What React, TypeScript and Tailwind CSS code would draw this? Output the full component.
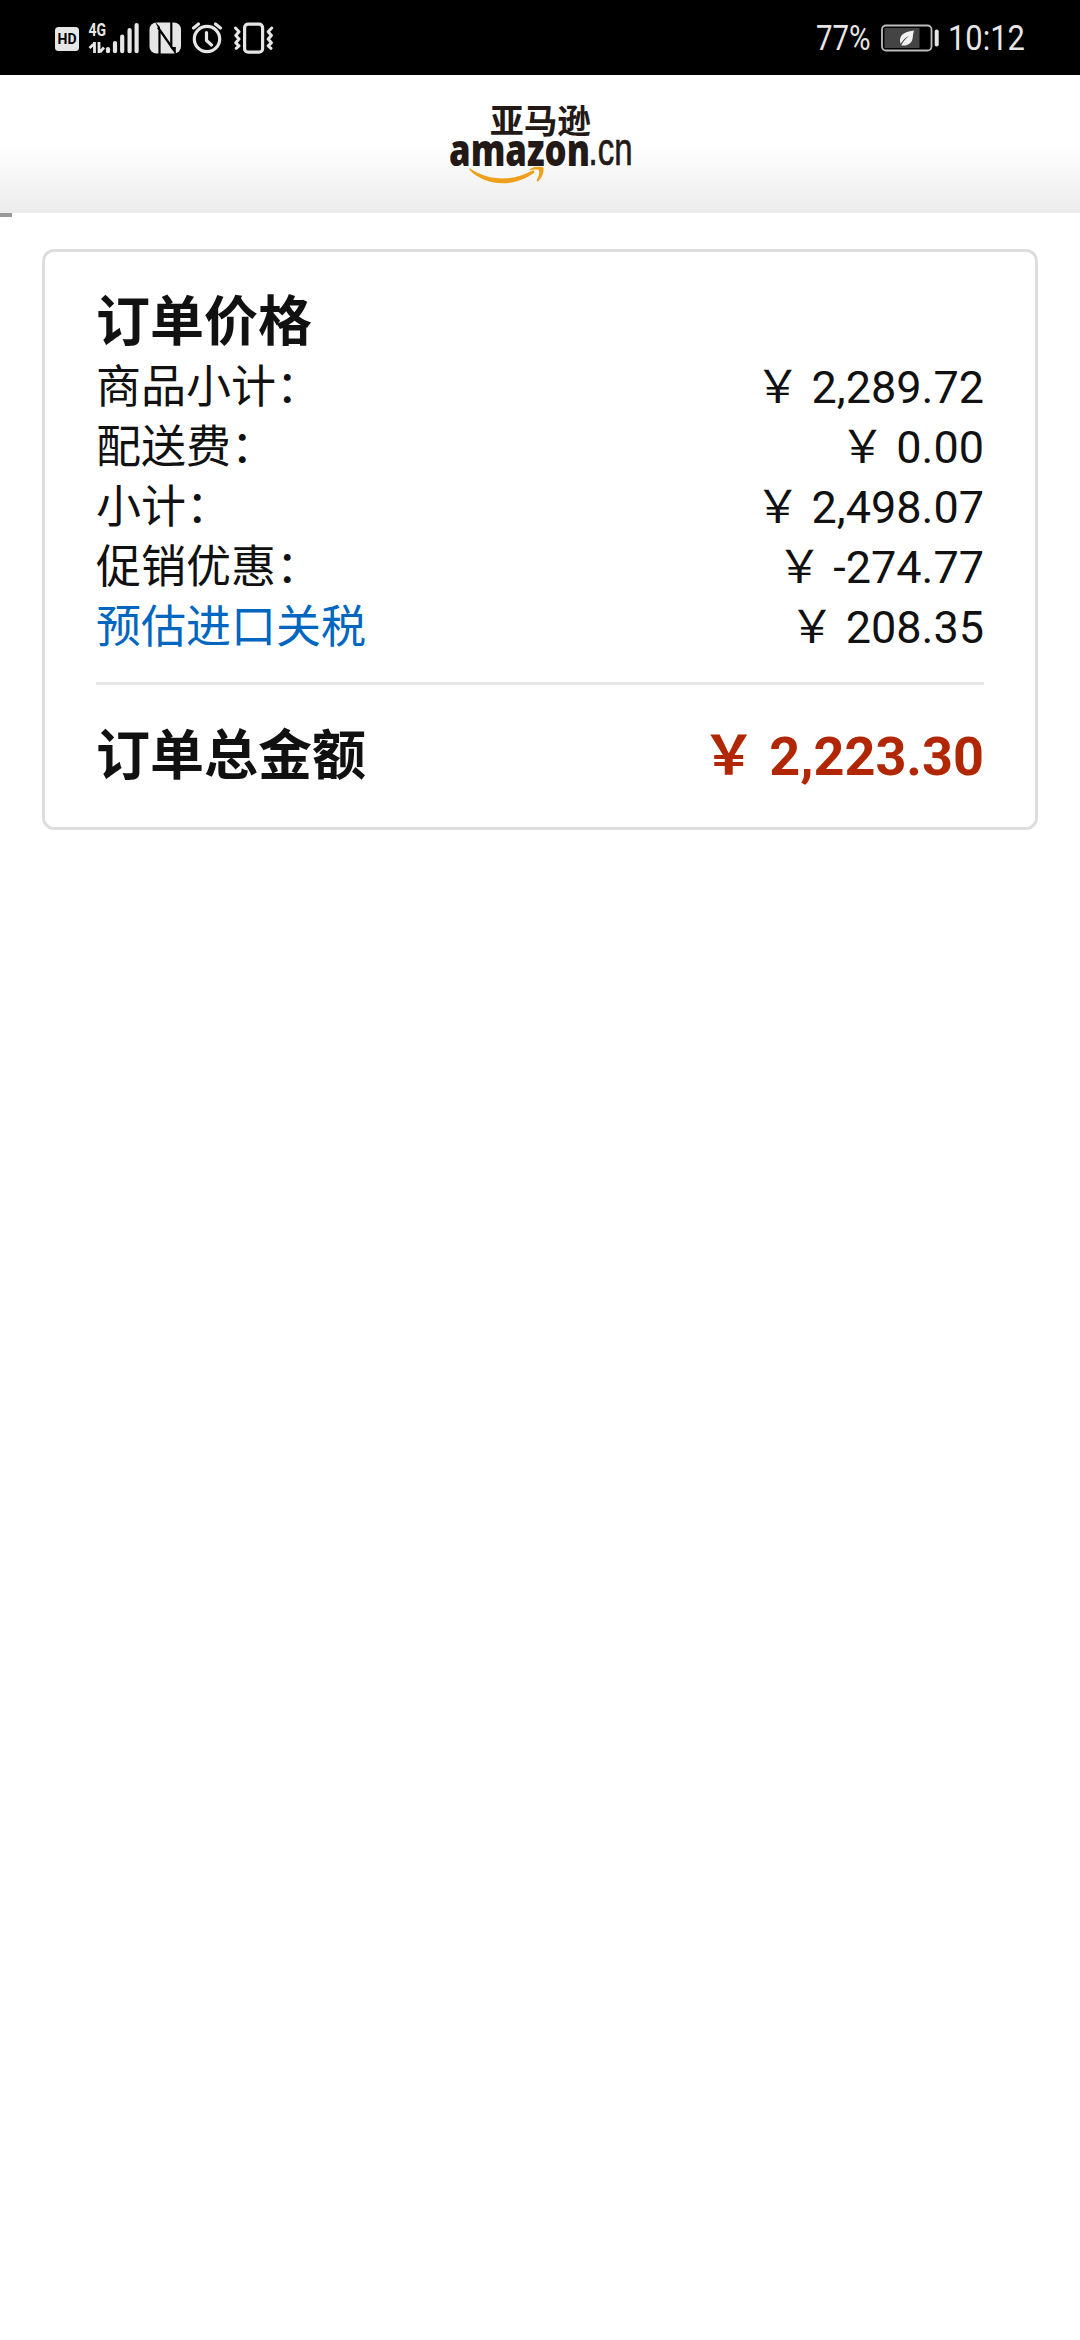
const rows = [
  { label: '商品小计：', value: '￥ 2,289.72' },
  { label: '配送费：', value: '￥ 0.00' },
  { label: '小计：', value: '￥ 2,498.07' },
  { label: '促销优惠：', value: '￥ -274.77' },
  { label: '预估进口关税', value: '￥ 208.35', link: true },
];

function StatusIcons() {
  return (
    <svg width="230" height="36" viewBox="50 19 230 36" fill="none" stroke="#e6e6e6">
      <rect x="55" y="26" width="24" height="24" rx="3.5" fill="#e6e6e6" stroke="none" />
      <text x="57.5" y="43" fontFamily="Roboto" fontWeight="700" fontSize="14" fill="#000" stroke="none" textLength="19" lengthAdjust="spacingAndGlyphs">HD</text>
      <text x="88.5" y="35" fontFamily="Roboto" fontWeight="700" fontSize="18.5" fill="#e6e6e6" stroke="none" textLength="17.5" lengthAdjust="spacingAndGlyphs">4G</text>
      <path d="M94.5 41v11M94.5 42.5l-5 4.5M99 41v11M100 51l4-4.5" strokeWidth="2.8" />
      <path d="M108 48v2.2M115 42v8.2M122.2 35.5v14.7M129.6 29v21.2M136.6 24v26.2" strokeWidth="4.2" strokeLinecap="round" />
      <rect x="149.5" y="21.5" width="31.5" height="31" rx="7" fill="#e6e6e6" stroke="none" />
      <path d="M159.5 53V28.5L172 46.5M171.3 21v24.5L158 26.5" stroke="#000" strokeWidth="2.2" />
      <path d="M155 20.500l5 5.500v5zM170.300 46l5.500 8v-8z" fill="#000" stroke="none" />
      <circle cx="207" cy="38" r="12.700" strokeWidth="3.200" />
      <path d="M206.500 31.500v8l5 4.500M193.500 27l5-4M220.500 27l-5-4" strokeWidth="3.200" strokeLinecap="round" />
      <rect x="244.600" y="23.200" width="18" height="28" rx="3.500" strokeWidth="3.200" />
      <path d="M235.500 27l3.500 3.700-3.200 3.700 3.200 3.700-3.200 3.700 3.200 3-2.800 2.500M271.700 27l-3.500 3.700 3.200 3.700-3.200 3.700 3.200 3.700-3.200 3 2.800 2.500" strokeWidth="3" strokeLinecap="round" strokeLinejoin="round" />
    </svg>
  );
}

function Battery() {
  return (
    <svg className="ml-[10px]" width="58" height="28" viewBox="881 23.500 58 28">
      <rect x="882" y="25" width="49.500" height="25" rx="4" fill="none" stroke="#bdbdbd" strokeWidth="1.800" />
      <rect x="884.500" y="27.500" width="35" height="20" fill="#444" />
      <rect x="934.700" y="29" width="4" height="17" rx="2" fill="#e6e6e6" />
      <path d="M914 30c-7.500 1-13.500 3-14 9-.1 1.800.2 3 .8 4.200 2-3.800 4.700-6.200 8.200-8-3.300 2.800-6 5.800-7.800 9.600 5.500 1.200 10.300-1.500 11.300-6.300.6-3 .5-5.500 1.500-8.500z" fill="#f2f2f2" />
    </svg>
  );
}

function Logo() {
  return (
    <svg className="overflow-visible" width="190" height="90" viewBox="445 98 190 90" fill="#231a17">
      <text x="490" y="132.500" fontFamily="'Noto Sans CJK SC', sans-serif" fontWeight="700" fontSize="33.500" textLength="101" lengthAdjust="spacingAndGlyphs">亚马逊</text>
      <text x="449" y="165.500" fontFamily="'Open Sans', sans-serif" fontWeight="800" fontSize="45" textLength="141" lengthAdjust="spacingAndGlyphs">amazon</text>
      <text x="588.500" y="165.300" fontFamily="'Liberation Sans', sans-serif" fontSize="45.500" stroke="#231a17" strokeWidth="0.700" textLength="44" lengthAdjust="spacingAndGlyphs">.cn</text>
      <path d="M469.500 168c18 13 43 14 64 2l1 2.500c-19 14.500-47 15-65-2.500z" fill="#ee9f1c" />
      <path d="M529.500 169.500c4.500-3.300 9.500-3 14-2 .5 5-1.500 10-5.500 14l-1.500-.8c2-4 3.300-7.200 2.500-10.700-3-.8-6.500-.3-9.500.3z" fill="#ee9f1c" />
    </svg>
  );
}

export default function App() {
  return (
    <div className="h-[2340px] w-[1080px] overflow-hidden bg-white font-[Roboto,'Noto_Sans_CJK_SC',sans-serif] text-[#111]">
      <header className="flex h-[75px] items-center bg-black pl-[50px] text-[35.5px] leading-[40px] text-[#e6e6e6]">
        <StatusIcons />
        <span className="ml-auto w-[55px] whitespace-nowrap">
          <span className="inline-block origin-left scale-x-[0.83]">77%</span>
        </span>
        <Battery />
        <span className="ml-[9px] w-[132px] whitespace-nowrap">
          <span className="inline-block origin-left scale-x-[0.87]">10:12</span>
        </span>
      </header>
      <div className="flex h-[138px] justify-center bg-linear-to-b from-white from-50% to-[#ececec] pt-[23px]">
        <Logo />
      </div>
      <div className="h-1 w-3 bg-[#999]" />
      <section className="mx-[42px] mt-8 h-[581px] rounded-xl border-[3px] border-[#ddd] px-[51px] pt-[35px]">
        <h1 className="h-[71px] text-[54px] leading-[72px] font-bold">订单价格</h1>
        <div className="text-[45px] leading-[60px]">
          {rows.map((row) => (
            <div key={row.label} className="flex h-[60px] justify-between whitespace-nowrap">
              <span className={row.link ? 'text-[#0066c0]' : ''}>{row.label}</span>
              <span>{row.value}</span>
            </div>
          ))}
        </div>
        <div className="mt-[24px] h-[3px] bg-[#e7e7e7]" />
        <div className="mt-[36px] flex h-[72px] justify-between text-[54px] leading-[72px] font-bold">
          <span>订单总金额</span>
          <span className="text-[#b12704]">￥ 2,223.30</span>
        </div>
      </section>
    </div>
  );
}
